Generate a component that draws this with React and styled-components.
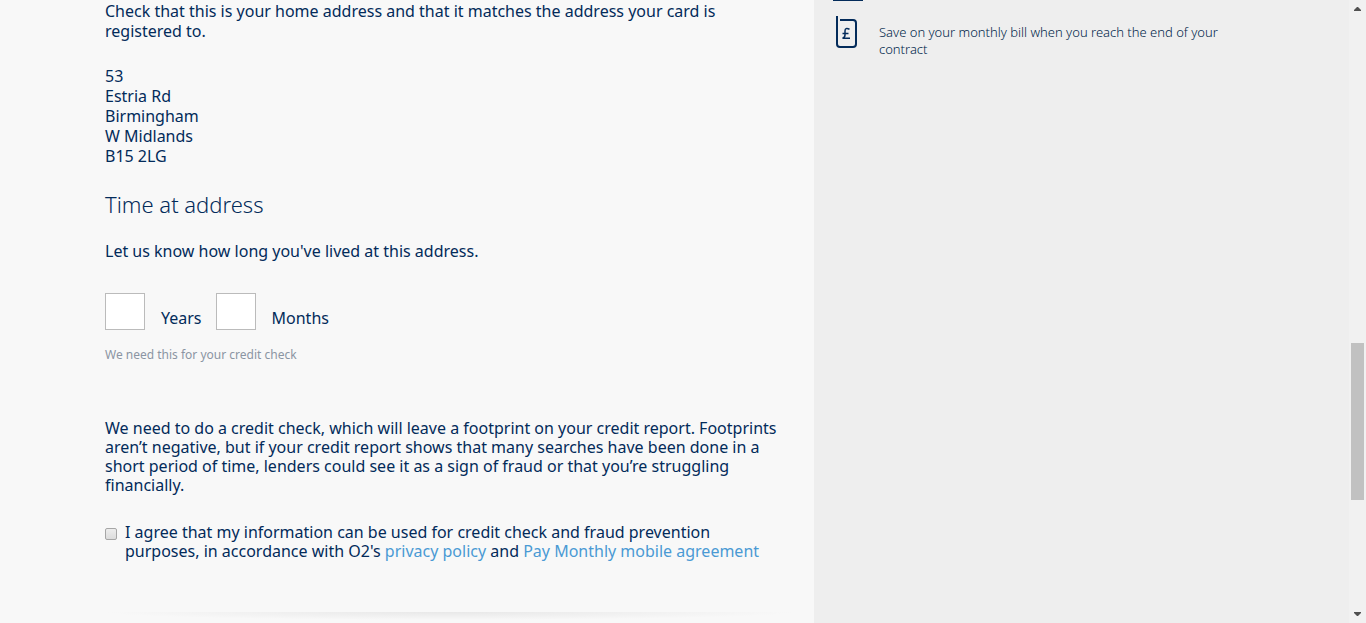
import React from "react";
import styled, { createGlobalStyle } from "styled-components";

const GlobalStyle = createGlobalStyle`
  *, *::before, *::after { box-sizing: border-box; }
  body {
    margin: 0;
    background: #f8f8f8;
    color: #032b5a;
    font-family: "Noto Sans", "Open Sans", sans-serif;
    font-size: 16px;
    line-height: 20px;
  }
`;

const Page = styled.div`
  display: grid;
  grid-template-columns: minmax(0, 814fr) minmax(0, 535fr) 17px;
  min-height: 100vh;
`;

const Main = styled.main`
  padding: 1px 20px 0 105px;
`;

const Paragraph = styled.p`
  margin: 0 0 ${(p) => p.$gap || 0}px;
  line-height: ${(p) => p.$leading || 20}px;
`;

const Address = styled.address`
  margin-bottom: 24px;
  font-style: normal;
`;

const Heading = styled.h2`
  margin: 0 0 23px;
  font-size: 22px;
  font-weight: 300;
  line-height: 28px;
`;

const Durations = styled.div`
  display: flex;
  gap: 14px;
  margin: 0 0 16px;
`;

const Duration = styled.div`
  display: flex;
  align-items: flex-end;
  gap: 16px;
`;

const DurationLabel = styled.label`
  padding-bottom: 2px;
`;

const DurationInput = styled.input`
  width: 40px;
  height: 37px;
  padding: 4px;
  border: 1px solid #bbb;
  border-radius: 0;
  background: #fff;
  color: inherit;
  font: inherit;
`;

const Hint = styled.p`
  margin: 0 0 55px;
  color: #8b95a3;
  font-size: 12px;
  line-height: 18px;
`;

const Consent = styled.div`
  display: flex;
  align-items: flex-start;
  gap: 7px;
  line-height: 19px;
`;

const Checkbox = styled.input`
  appearance: none;
  flex: none;
  width: 12px;
  height: 12px;
  margin: 5px 1px 0 0;
  border: 1px solid #a6a6a6;
  border-radius: 2px;
  background: linear-gradient(#ededed, #dcdcdc);

  &:checked { background: #032b5a; }
`;

const Link = styled.a`
  color: #4a9ad4;
  text-decoration: none;
`;

const Divider = styled.hr`
  height: 8px;
  margin: 51px 0 0;
  border: 0;
  background: radial-gradient(ellipse 50% 100% at 50% 0, #e8e8e8, #f8f8f8);
`;

const Aside = styled.aside`
  padding: 0 20px 0 19px;
  background: #eee;
`;

const BenefitEdge = styled.div`
  width: 30px;
  height: 1px;
  background: #032b5a;
`;

const Benefit = styled.div`
  display: flex;
  gap: 21px;
  padding: 15px 0 0 3px;
`;

const BillIcon = styled.svg`
  flex: none;
  width: 22px;
  height: 32px;
`;

const BenefitText = styled.p`
  margin: 8px 0 0;
  color: #001f4a;
  font-size: 13px;
  font-weight: 300;
  line-height: 17px;
`;

const ScrollRail = styled.div`
  display: flex;
  flex-direction: column;
  align-items: center;
  background: #f1f1f1;
`;

const ScrollArrow = styled.svg`
  flex: none;
  width: 17px;
  height: 17px;
  fill: #505050;
`;

const ScrollSpace = styled.div`
  flex: ${(p) => p.$share} 1 0;
`;

const ScrollThumb = styled.div`
  flex: 157 1 0;
  width: 13px;
  background: #c1c1c1;
`;

export default function App() {
  return (
    <>
      <GlobalStyle />
      <Page>
        <Main>
          <Paragraph $gap={25}>
            Check that this is your home address and that it matches the address your card is
            <br />
            registered to.
          </Paragraph>
          <Address>
            53
            <br />
            Estria Rd
            <br />
            Birmingham
            <br />
            W Midlands
            <br />
            B15 2LG
          </Address>
          <Heading>Time at address</Heading>
          <Paragraph $gap={32}>Let us know how long you've lived at this address.</Paragraph>
          <Durations>
            <Duration>
              <DurationInput id="years" type="text" inputMode="numeric" />
              <DurationLabel htmlFor="years">Years</DurationLabel>
            </Duration>
            <Duration>
              <DurationInput id="months" type="text" inputMode="numeric" />
              <DurationLabel htmlFor="months">Months</DurationLabel>
            </Duration>
          </Durations>
          <Hint>We need this for your credit check</Hint>
          <Paragraph $gap={28} $leading={19}>
            We need to do a credit check, which will leave a footprint on your credit report. Footprints
            <br />
            aren’t negative, but if your credit report shows that many searches have been done in a
            <br />
            short period of time, lenders could see it as a sign of fraud or that you’re struggling
            <br />
            financially.
          </Paragraph>
          <Consent>
            <Checkbox type="checkbox" id="consent" />
            <label htmlFor="consent">
              I agree that my information can be used for credit check and fraud prevention
              <br />
              purposes, in accordance with O2's <Link href="#privacy">privacy policy</Link> and{" "}
              <Link href="#agreement">Pay Monthly mobile agreement</Link>
            </label>
          </Consent>
          <Divider />
        </Main>
        <Aside>
          <BenefitEdge />
          <Benefit>
            <BillIcon viewBox="0 0 22 32" fill="none" stroke="#032b5a" strokeWidth="2" aria-hidden="true">
              <path d="M1 0V28Q1 31 4 31H17Q20 31 20 28V7Q20 4 17 4H4" />
              <path d="M13.5 13.2Q9 11.2 9 15V19Q9 21.5 6.5 22.2H14M6.5 17.6H12.5" strokeWidth="1.5" />
            </BillIcon>
            <BenefitText>
              Save on your monthly bill when you reach the end of your
              <br />
              contract
            </BenefitText>
          </Benefit>
        </Aside>
        <ScrollRail aria-hidden="true">
          <ScrollArrow viewBox="0 0 17 17">
            <path d="M5 11V10L8 7H9L12 10V11Z" />
          </ScrollArrow>
          <ScrollSpace $share={326} />
          <ScrollThumb />
          <ScrollSpace $share={106} />
          <ScrollArrow viewBox="0 0 17 17">
            <path d="M5 6V7L8 10H9L12 7V6Z" />
          </ScrollArrow>
        </ScrollRail>
      </Page>
    </>
  );
}
